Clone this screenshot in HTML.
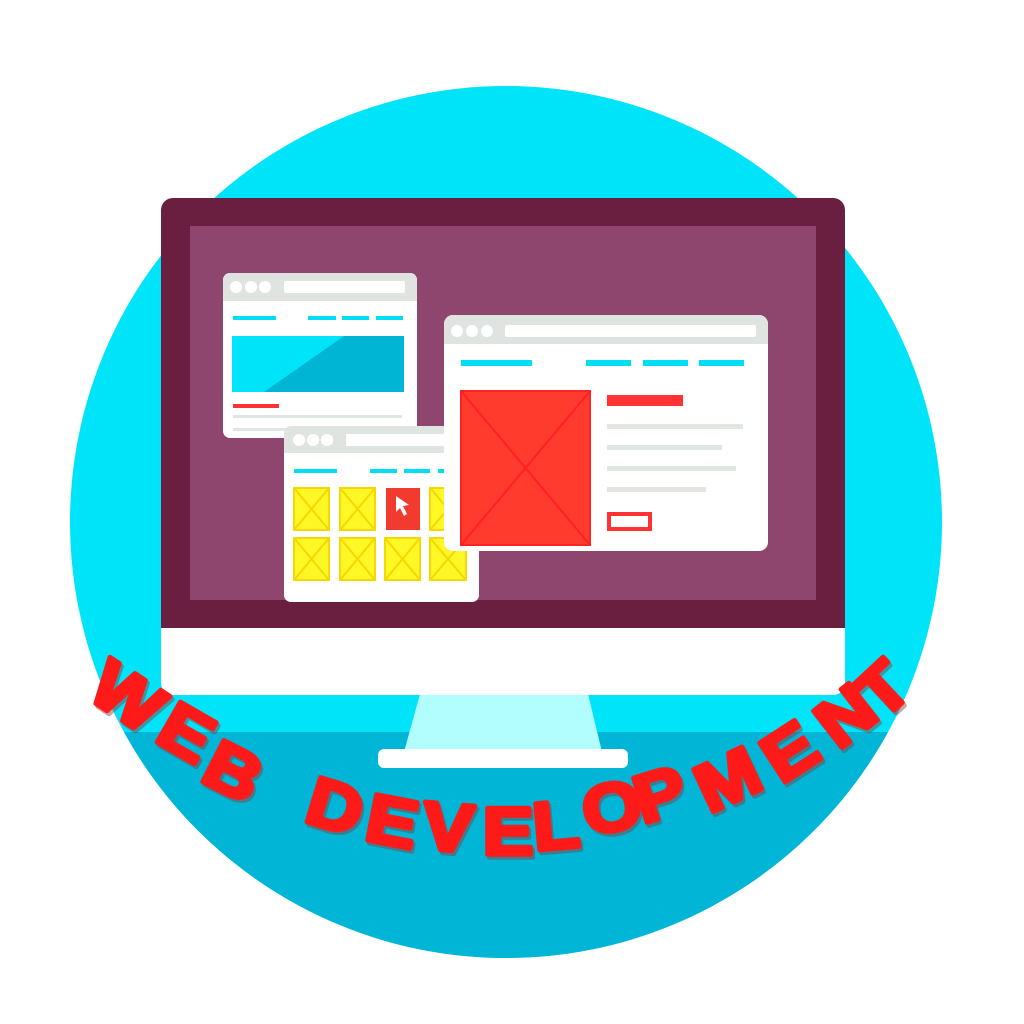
<!DOCTYPE html>
<html><head><meta charset="utf-8"><style>html,body{margin:0;padding:0;background:#fff;}svg{display:block}
.t text{font-family:"Liberation Sans",Arial,sans-serif;font-weight:700;font-size:68px;fill:#ff1a1a;stroke:#ff1a1a;stroke-width:4.5px;stroke-linejoin:round;text-anchor:middle;dominant-baseline:central}
.s text{font-family:"Liberation Sans",Arial,sans-serif;font-weight:700;font-size:68px;fill:#8a3a3a;stroke:#8a3a3a;stroke-width:4.5px;stroke-linejoin:round;text-anchor:middle;dominant-baseline:central;opacity:.45}
</style></head>
<body>
<svg width="1024" height="1024" viewBox="0 0 1024 1024" xmlns="http://www.w3.org/2000/svg">
<defs>
<clipPath id="c"><circle cx="506" cy="522" r="436"/></clipPath>
</defs>
<circle cx="506" cy="522" r="436" fill="#00e4fa"/>
<rect x="0" y="732" width="1024" height="300" fill="#00b5d5" clip-path="url(#c)"/>
<polygon points="420,694 588,694 602,752 404,752" fill="#b2feff"/>
<rect x="378" y="749" width="250" height="19" rx="6" fill="#fff"/>
<rect x="161" y="198" width="684" height="497" rx="12" fill="#fff"/>
<path d="M173 198 H833 A12 12 0 0 1 845 210 V628 H161 V210 A12 12 0 0 1 173 198Z" fill="#6a1e40"/>
<rect x="190" y="226" width="626" height="374" fill="#8e456e"/>
<rect x="223" y="273" width="194" height="165" rx="7" fill="#fff"/>
<path d="M230 273 H410 A7 7 0 0 1 417 280 V301 H223 V280 A7 7 0 0 1 230 273Z" fill="#dfe4e1"/>
<circle cx="236" cy="287" r="6" fill="#fff"/><circle cx="251" cy="287" r="6" fill="#fff"/><circle cx="265" cy="287" r="6" fill="#fff"/>
<rect x="284" y="281" width="121" height="12" rx="2" fill="#fff"/>
<g fill="#00def5"><rect x="233" y="316" width="43" height="4"/><rect x="308" y="316" width="28" height="4"/><rect x="342" y="316" width="27" height="4"/><rect x="376" y="316" width="27" height="4"/></g>
<rect x="232" y="336" width="172" height="56" fill="#00b4d4"/>
<polygon points="232,336 344,336 264,392 232,392" fill="#00e4fa"/>
<rect x="233" y="404" width="46" height="4" fill="#f33"/>
<rect x="233" y="415" width="169" height="3" fill="#e2e6e3"/>
<rect x="233" y="428" width="60" height="3" fill="#e2e6e3"/>
<rect x="284" y="426" width="195" height="176" rx="7" fill="#fff"/>
<path d="M291 426 H472 A7 7 0 0 1 479 433 V453 H284 V433 A7 7 0 0 1 291 426Z" fill="#dfe4e1"/>
<circle cx="299" cy="440" r="6" fill="#fff"/><circle cx="313" cy="440" r="6" fill="#fff"/><circle cx="327" cy="440" r="6" fill="#fff"/>
<rect x="346" y="434" width="120" height="12" rx="2" fill="#fff"/>
<g fill="#00def5"><rect x="294" y="469" width="43" height="4"/><rect x="370" y="469" width="27" height="4"/><rect x="404" y="469" width="26" height="4"/><rect x="438" y="469" width="20" height="4"/></g>
<g stroke="#f5d800" stroke-width="2" fill="#fff826">
<rect x="294" y="488" width="35" height="42"/><rect x="340" y="488" width="35" height="42"/><rect x="430" y="488" width="36" height="42"/>
<rect x="294" y="538" width="35" height="42"/><rect x="340" y="538" width="35" height="42"/><rect x="385" y="538" width="35" height="42"/><rect x="430" y="538" width="36" height="42"/>
</g>
<g stroke="#f5d800" stroke-width="2">
<path d="M294 488 L329 530 M329 488 L294 530 M340 488 L375 530 M375 488 L340 530 M430 488 L466 530 M466 488 L430 530 M294 538 L329 580 M329 538 L294 580 M340 538 L375 580 M375 538 L340 580 M385 538 L420 580 M420 538 L385 580 M430 538 L466 580 M466 538 L430 580"/>
</g>
<rect x="386" y="488" width="34" height="42" fill="#f23b2e"/>
<path d="M396 496 L396 512 L400 508 L404 516 L407 514 L403 506 L409 505 Z" fill="#fff"/>
<rect x="444" y="315" width="324" height="236" rx="9" fill="#fff"/>
<path d="M453 315 H759 A9 9 0 0 1 768 324 V344 H444 V324 A9 9 0 0 1 453 315Z" fill="#dfe4e1"/>
<circle cx="457" cy="331" r="6" fill="#fff"/><circle cx="472" cy="331" r="6" fill="#fff"/><circle cx="487" cy="331" r="6" fill="#fff"/>
<rect x="505" y="325" width="251" height="12" rx="2" fill="#fff"/>
<g fill="#00def5"><rect x="461" y="360" width="71" height="6"/><rect x="586" y="360" width="45" height="6"/><rect x="643" y="360" width="45" height="6"/><rect x="699" y="360" width="45" height="6"/></g>
<rect x="461" y="391" width="129" height="154" fill="#ff3b2d" stroke="#ff2222" stroke-width="2"/>
<path d="M461 391 L590 545 M590 391 L461 545" stroke="#ff1f24" stroke-width="2"/>
<rect x="607" y="395" width="76" height="11" fill="#f33"/>
<g fill="#e2e6e3"><rect x="607" y="424" width="136" height="5"/><rect x="607" y="445" width="115" height="5"/><rect x="607" y="466" width="129" height="5"/><rect x="607" y="487" width="99" height="5"/></g>
<rect x="609" y="514" width="41" height="15" fill="none" stroke="#f33" stroke-width="4"/>
<g class="s" transform="translate(2,3)">
<text transform="translate(127,697) rotate(33) scale(1.12,1)">W</text>
<text transform="translate(186,733) rotate(30) scale(1.12,1)">E</text>
<text transform="translate(233,772) rotate(27) scale(1.12,1)">B</text>
<text transform="translate(335,807) rotate(17) scale(1.12,1)">D</text>
<text transform="translate(392,822) rotate(11) scale(1.12,1)">E</text>
<text transform="translate(448,828) rotate(5) scale(1.12,1)">V</text>
<text transform="translate(508,832) rotate(0) scale(1.12,1)">E</text>
<text transform="translate(556,826) rotate(-5) scale(1.12,1)">L</text>
<text transform="translate(612,808) rotate(-10) scale(1.12,1)">O</text>
<text transform="translate(660,795) rotate(-17) scale(1.12,1)">P</text>
<text transform="translate(728,780) rotate(-25) scale(1.12,1)">M</text>
<text transform="translate(790,752) rotate(-33) scale(1.12,1)">E</text>
<text transform="translate(846,716) rotate(-38) scale(1.12,1)">N</text>
<text transform="translate(883,690) rotate(-43) scale(1.12,1)">T</text>
</g>
<g class="t">
<text transform="translate(127,697) rotate(33) scale(1.12,1)">W</text>
<text transform="translate(186,733) rotate(30) scale(1.12,1)">E</text>
<text transform="translate(233,772) rotate(27) scale(1.12,1)">B</text>
<text transform="translate(335,807) rotate(17) scale(1.12,1)">D</text>
<text transform="translate(392,822) rotate(11) scale(1.12,1)">E</text>
<text transform="translate(448,828) rotate(5) scale(1.12,1)">V</text>
<text transform="translate(508,832) rotate(0) scale(1.12,1)">E</text>
<text transform="translate(556,826) rotate(-5) scale(1.12,1)">L</text>
<text transform="translate(612,808) rotate(-10) scale(1.12,1)">O</text>
<text transform="translate(660,795) rotate(-17) scale(1.12,1)">P</text>
<text transform="translate(728,780) rotate(-25) scale(1.12,1)">M</text>
<text transform="translate(790,752) rotate(-33) scale(1.12,1)">E</text>
<text transform="translate(846,716) rotate(-38) scale(1.12,1)">N</text>
<text transform="translate(883,690) rotate(-43) scale(1.12,1)">T</text>
</g>
</svg>
</body></html>
